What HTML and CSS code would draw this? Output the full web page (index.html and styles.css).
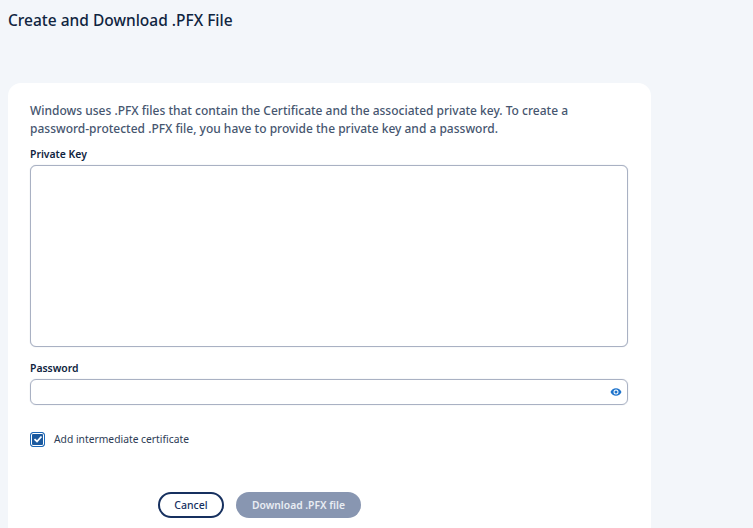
FILE: index.html
```html
<!DOCTYPE html>
<html lang="en">
<head>
    <meta charset="UTF-8">
    <meta name="viewport" content="width=device-width, initial-scale=1.0">
    <title>Create and Download .PFX File</title>
    <link rel="stylesheet" href="styles.css">
</head>
<body>
    <h1 class="page-title">Create and Download .PFX File</h1>

    <form class="card">
        <p class="intro">Windows uses .PFX files that contain the Certificate and the associated private key. To create a password-protected .PFX file, you have to provide the private key and a password.</p>

        <label class="field-label" for="private-key">Private Key</label>
        <textarea class="key-input" id="private-key"></textarea>

        <label class="field-label password-label" for="password">Password</label>
        <div class="password-box">
            <input class="password-input" type="password" id="password">
            <svg class="eye" viewBox="0 0 24 24" width="12" height="12" aria-hidden="true">
                <path fill="#1f74cc" fill-rule="evenodd" d="M12 4.500C7 4.500 2.700 7.600 1 12c1.700 4.400 6 7.500 11 7.500s9.300-3.100 11-7.500c-1.700-4.400-6-7.500-11-7.500zM12 17a5 5 0 1 1 0-10 5 5 0 0 1 0 10zm0-8a3 3 0 1 0 0 6 3 3 0 0 0 0-6z"/>
            </svg>
        </div>

        <label class="check-row">
            <span class="check-box">
                <svg viewBox="0 0 10 10" width="10" height="10" aria-hidden="true">
                    <path d="M1.500 5.200 4 7.500 8.500 2.500" fill="none" stroke="#fff" stroke-width="1.800"/>
                </svg>
            </span>
            Add intermediate certificate
        </label>

        <div class="actions">
            <button type="button" class="btn btn-cancel">Cancel</button>
            <button type="button" class="btn btn-download">Download .PFX file</button>
        </div>
    </form>
</body>
</html>
```

FILE: styles.css
```css
html, body {
    height: 100%;
    overflow: hidden;
}
body {
    margin: 0;
    background: #f3f6fa;
    font-family: "Noto Sans", "Open Sans", sans-serif;
    color: #0f2440;
}
.page-title {
    margin: 0;
    padding: 10px 8px 0;
    height: 83px;
    box-sizing: border-box;
    font-size: 15.500px;
    line-height: 21px;
    font-weight: 500;
}
.card {
    display: flex;
    flex-direction: column;
    box-sizing: border-box;
    width: 643px;
    height: 445px;
    margin-left: 8px;
    padding: 19px 23px 0 22px;
    background: #fff;
    border-radius: 13px 13px 0 0;
}
.intro {
    margin: 0 0 8px;
    font-size: 12px;
    line-height: 18px;
    font-weight: 500;
    color: #46566f;
}
.field-label {
    font-size: 10.400px;
    line-height: 16px;
    font-weight: 600;
    color: #0f2440;
}
.key-input {
    box-sizing: border-box;
    width: 598px;
    height: 182px;
    margin: 3px 0 0;
    border: 1px solid #a9b1c3;
    border-radius: 6px;
    background: #fff;
    box-shadow: 0 0 1px #b4bccb;
    resize: none;
}
.password-label {
    margin-top: 13px;
}
.password-box {
    display: flex;
    align-items: center;
    box-sizing: border-box;
    width: 598px;
    height: 26px;
    margin-top: 3px;
    padding-right: 5px;
    border: 1px solid #a9b1c3;
    border-radius: 6px;
    box-shadow: 0 0 1px #b4bccb;
}
.password-input {
    flex: 1;
    min-width: 0;
    border: 0;
    outline: 0;
    background: transparent;
}
.check-row {
    display: flex;
    align-items: center;
    gap: 9px;
    margin-top: 26px;
    font-size: 10.300px;
    line-height: 16px;
    color: #2d3c55;
}
.check-box {
    display: flex;
    align-items: center;
    justify-content: center;
    box-sizing: border-box;
    width: 15px;
    height: 15px;
    border: 1.500px solid #1c68b8;
    border-radius: 3px;
    background: #1c5a9f;
    box-shadow: inset 0 0 0 1px #fff;
}
.actions {
    display: flex;
    gap: 12px;
    margin: 45px 0 0 128px;
}
.btn {
    box-sizing: border-box;
    height: 26px;
    padding: 0;
    border-radius: 13px;
    font-family: inherit;
    font-size: 10.500px;
    font-weight: 500;
}
.btn-cancel {
    width: 66px;
    border: 2px solid #16305f;
    background: #fff;
    color: #16305f;
}
.btn-download {
    width: 125px;
    border: 0;
    background: #8896b1;
    color: #e9edf3;
    font-size: 10.300px;
    font-weight: 600;
}
```
